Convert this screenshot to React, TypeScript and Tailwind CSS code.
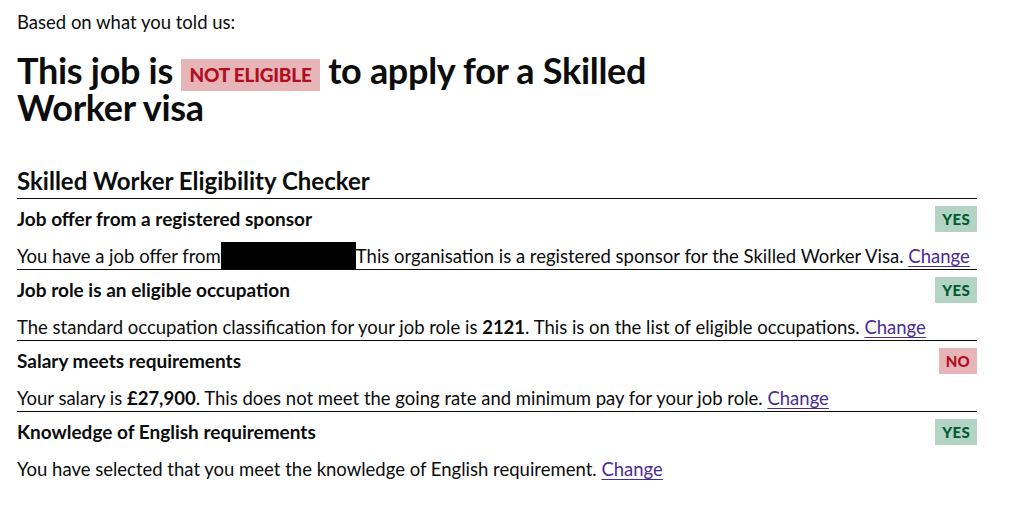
import React from "react";

function Tag({ children, tone }: { children: React.ReactNode; tone: "green" | "red" }) {
  return (
    <span
      className={
        "inline-flex h-[26px] items-center px-[7px] text-[15px] font-black uppercase leading-none tracking-[0.3px] " +
        (tone === "green" ? "bg-[#b3d3c4] text-[#005a30]" : "bg-[#e7b4b8] text-[#b10e1e]")
      }
    >
      {children}
    </span>
  );
}

function Row({
  title,
  tone,
  label,
  children,
  last,
}: {
  title: string;
  tone: "green" | "red";
  label: string;
  children: React.ReactNode;
  last?: boolean;
}) {
  return (
    <div className={"pt-[7px] " + (last ? "" : "border-b border-[#0b0c0c]")}>
      <div className="flex h-[26px] items-center justify-between">
        <h3 className="text-[19px] font-bold leading-[26px]">{title}</h3>
        <Tag tone={tone}>{label}</Tag>
      </div>
      <p className="mt-[11px] text-[18.5px] leading-[26px]">{children}</p>
    </div>
  );
}

function Change() {
  return (
    <a href="#" className="text-[#4c2c92] underline underline-offset-[3px] decoration-1">
      Change
    </a>
  );
}

export default function App() {
  return (
    <div
      className="min-h-[510px] w-[1009px] bg-white text-[#0b0c0c]"
      style={{ fontFamily: "Lato, 'Liberation Sans', sans-serif" }}
    >
      <div className="w-[977px] pl-[17px] pt-[10px]">
        <p className="text-[18.5px] leading-[24px]">Based on what you told us:</p>
        <h1 className="mt-[18px] text-[36px] font-bold leading-[37px] tracking-[-0.3px]">
          This job is{" "}
          <span className="-my-[4px] inline-block h-[32px] bg-[#e7b4b8] px-[8px] align-middle text-[19px] font-black uppercase leading-[32px] tracking-[-0.2px] text-[#b10e1e]">
            Not eligible
          </span>{" "}
          to apply for a Skilled
          <br />
          Worker visa
        </h1>
        <h2 className="mt-[40px] border-b border-[#0b0c0c] pb-[2px] text-[24px] font-bold leading-[30px]">
          Skilled Worker Eligibility Checker
        </h2>
        <Row title="Job offer from a registered sponsor" tone="green" label="Yes">
          You have a job offer from
          <span className="-mt-[4px] inline-block h-[27px] w-[135px] bg-black align-[-6px]" />
          This organisation is a registered sponsor for the Skilled Worker Visa. <Change />
        </Row>
        <Row title="Job role is an eligible occupation" tone="green" label="Yes">
          The standard occupation classification for your job role is <b>2121</b>. This is on the list of eligible
          occupations. <Change />
        </Row>
        <Row title="Salary meets requirements" tone="red" label="No">
          Your salary is <b>£27,900</b>. This does not meet the going rate and minimum pay for your job role.{" "}
          <Change />
        </Row>
        <Row title="Knowledge of English requirements" tone="green" label="Yes" last>
          You have selected that you meet the knowledge of English requirement. <Change />
        </Row>
      </div>
    </div>
  );
}
